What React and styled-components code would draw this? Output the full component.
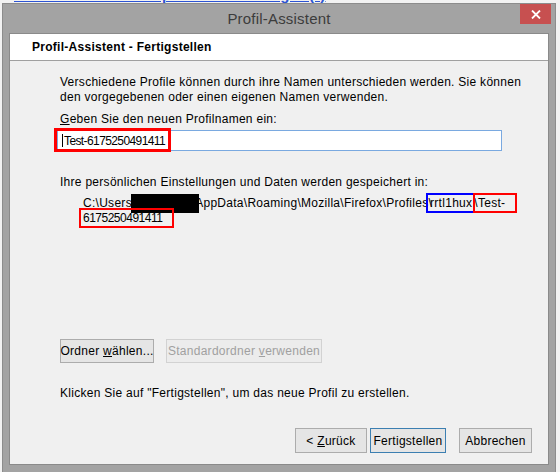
import React from 'react';
import styled, { createGlobalStyle } from 'styled-components';

const GlobalStyle = createGlobalStyle`
    html, body {
        margin: 0;
        padding: 0;
        width: 560px;
        height: 472px;
        overflow: hidden;
        background: #f2f2f2;
    }
    body {
        font-family: "Segoe UI", "Liberation Sans", Arial, sans-serif;
        font-size: 12px;
        letter-spacing: 0.28px;
        color: #000;
    }
`;

const Desktop = styled.div`
    width: 560px;
    height: 472px;
    overflow: hidden;
`;

const BackStrip = styled.div`
    height: 3px;
    overflow: hidden;
`;

const BackLink = styled.div`
    margin-top: -13px;
    padding-left: 14px;
    font-size: 15px;
    font-weight: bold;
    line-height: 16px;
    color: #2d54d2;
    text-decoration: underline;
    white-space: nowrap;
`;

const Window = styled.div`
    width: 554px;
    height: 475px;
    margin-left: 2px;
    box-sizing: border-box;
    border: 1px solid #8c8c8c;
    background: #a3a3a3;
    padding: 0 6px;
`;

const TitleBar = styled.div`
    height: 29px;
    display: grid;
    grid-template-columns: 1fr auto 1fr;
    align-items: center;
`;

const TitleText = styled.div`
    grid-column: 2;
    font-size: 15px;
    letter-spacing: 0.2px;
    color: #3c3c3c;
`;

const CloseButton = styled.div`
    grid-column: 3;
    justify-self: end;
    align-self: start;
    width: 31px;
    height: 20px;
    margin-right: -2px;
    background: #c75050;
    display: flex;
    align-items: center;
    justify-content: center;
`;

const Client = styled.div`
    height: 432px;
    box-sizing: border-box;
    border: 1px solid #8a8a8a;
    background: #f0f0f0;
    display: flex;
    flex-direction: column;
`;

const Header = styled.div`
    height: 26px;
    background: #fff;
    border-bottom: 1px solid #a0a0a0;
    padding-left: 22px;
    display: flex;
    align-items: center;
    font-weight: bold;
`;

const Body = styled.div`
    flex: 1;
    padding: 0 16px 0 50px;
    display: flex;
    flex-direction: column;
`;

const Text = styled.div`
    line-height: 15px;
    margin-top: ${p => p.$top || 0}px;
    padding-left: ${p => p.$indent || 0}px;
    white-space: nowrap;
`;

const Field = styled.div`
    position: relative;
    width: 445px;
    height: 21px;
    margin: 3px 0 0 -3px;
    box-sizing: border-box;
    border: 1px solid #7aa9e0;
    background: #fff;
    display: flex;
    align-items: center;
    padding-left: 4px;
    letter-spacing: -0.6px;
`;

const Caret = styled.span`
    display: inline-block;
    width: 1px;
    height: 13px;
    background: #000;
    margin-right: 1px;
`;

const InputMark = styled.div`
    position: absolute;
    left: -4px;
    top: -3px;
    width: 117px;
    height: 24px;
    box-sizing: border-box;
    border: 3px solid #ff0000;
`;

const Redacted = styled.span`
    padding: 2.5px 34px;
    margin: 0 -7px 0 -5px;
    background: #000;
`;

const Mark = styled.span`
    border: 2px solid ${p => p.$color};
    padding: 1px ${p => p.$pr || 0}px 1px ${p => p.$pl || 0}px;
    margin: 0 ${p => p.$mr || 0}px 0 ${p => p.$ml || 0}px;
    letter-spacing: ${p => p.$ls ?? 0.28}px;
`;

const ButtonRow = styled.div`
    display: flex;
    gap: ${p => p.$gap || 12}px;
    justify-content: ${p => p.$end ? 'flex-end' : 'flex-start'};
    margin-top: ${p => p.$top || 0}px;
`;

const Button = styled.div`
    height: ${p => p.$h || 24}px;
    width: ${p => p.$w}px;
    box-sizing: border-box;
    border: 1px solid ${p => p.$default ? '#3c7fb1' : p.$disabled ? '#d2d2d2' : '#acacac'};
    background: ${p => p.$disabled ? '#ececec' : '#e5e5e5'};
    color: ${p => p.$disabled ? '#a0a0a0' : '#000'};
    display: flex;
    align-items: center;
    justify-content: center;
    margin-left: ${p => p.$ml || 0}px;
    white-space: nowrap;
`;

const U = styled.span`
    text-decoration: underline;
`;

export default function App() {
    return (
        <Desktop>
            <GlobalStyle />
            <BackStrip>
                <BackLink>ema – Sicherer und privater Messenger (*)</BackLink>
            </BackStrip>
            <Window>
                <TitleBar>
                    <TitleText>Profil-Assistent</TitleText>
                    <CloseButton>
                        <svg width="10" height="9" viewBox="0 0 10 9">
                            <path d="M1 0.5 L9 8.5 M9 0.5 L1 8.5" stroke="#fff" strokeWidth="1.8" />
                        </svg>
                    </CloseButton>
                </TitleBar>
                <Client>
                    <Header>Profil-Assistent - Fertigstellen</Header>
                    <Body>
                        <Text $top={14}>
                            Verschiedene Profile können durch ihre Namen unterschieden werden. Sie können<br />
                            den vorgegebenen oder einen eigenen Namen verwenden.
                        </Text>
                        <Text $top={7}><U>G</U>eben Sie den neuen Profilnamen ein:</Text>
                        <Field>
                            <Caret />Test-6175250491411
                            <InputMark />
                        </Field>
                        <Text $top={24}>Ihre persönlichen Einstellungen und Daten werden gespeichert in:</Text>
                        <Text $top={6} $indent={23}>
                            C:\Users\<Redacted />\AppData\Roaming\Mozilla\Firefox\Profiles\<Mark $color="#0000ff" $ml={-6} $pl={2} $pr={1} $mr={-1}>rrtl1hux</Mark>\<Mark $color="#ff0000" $ml={-5} $pl={3} $pr={10}>Test-</Mark>
                        </Text>
                        <Text $indent={19}>
                            <Mark $color="#ff0000" $ls={-0.5} $pl={2} $pr={10}>6175250491411</Mark>
                        </Text>
                        <ButtonRow $top={113}>
                            <Button $w={94}><span>Ordner <U>w</U>ählen...</span></Button>
                            <Button $w={156} $disabled><span>Standardordner <U>v</U>erwenden</span></Button>
                        </ButtonRow>
                        <Text $top={23}>Klicken Sie auf "Fertigstellen", um das neue Profil zu erstellen.</Text>
                        <ButtonRow $top={27} $end $gap={3}>
                            <Button $w={72} $h={25}><span>&lt; <U>Z</U>urück</span></Button>
                            <Button $w={76} $h={25} $default><span>Fertigstellen</span></Button>
                            <Button $w={73} $h={25} $ml={10}><span>Abbrechen</span></Button>
                        </ButtonRow>
                    </Body>
                </Client>
            </Window>
        </Desktop>
    );
}
